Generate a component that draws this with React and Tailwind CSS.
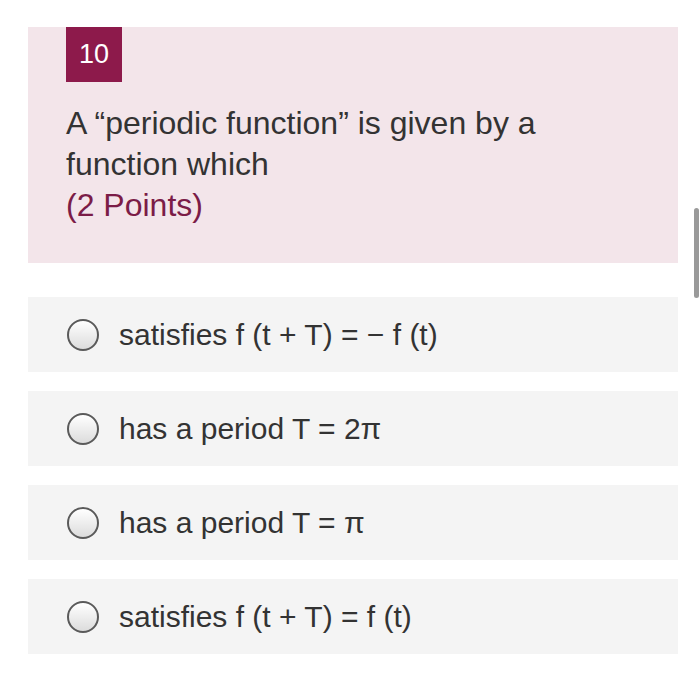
const options = [
    "satisfies f (t + T) = − f (t)",
    "has a period T = 2π",
    "has a period T = π",
    "satisfies f (t + T) = f (t)",
]

function Radio() {
    return (
        <span className="w-[32px] h-[32px] shrink-0 rounded-full border-2 border-[#5a5a5a] bg-gradient-to-b from-white to-[#dcdcdc]"></span>
    )
}

export default function App() {
    return (
        <div className="relative w-[700px] h-[700px] bg-white overflow-hidden" style={{ fontFamily: '"Liberation Sans", Arial, sans-serif' }}>
            <div className="pl-[28px] pt-[27px] w-[678px]">
                <div className="bg-[#f3e5ea] px-[38px] pb-[37px]">
                    <div className="w-[56px] h-[55px] bg-[#8d1a4b] text-white text-[27px] flex items-center justify-center">10</div>
                    <div className="mt-[21px] pr-[40px] text-[32px] leading-[41px] text-[#333333]">
                        A “periodic function” is given by a function which
                        <div className="text-[#7b1c47]">(2 Points)</div>
                    </div>
                </div>
                <div className="mt-[34px] flex flex-col gap-[19px]">
                    {options.map((o) => (
                        <div key={o} className="h-[75px] bg-[#f4f4f4] flex items-center pl-[39px] gap-[20px]">
                            <Radio />
                            <span className="text-[30px] text-[#333333]">{o}</span>
                        </div>
                    ))}
                </div>
            </div>
            <div className="absolute right-[1px] top-[208px] w-[5px] h-[90px] rounded-full bg-[#9a9a9a]"></div>
        </div>
    )
}
